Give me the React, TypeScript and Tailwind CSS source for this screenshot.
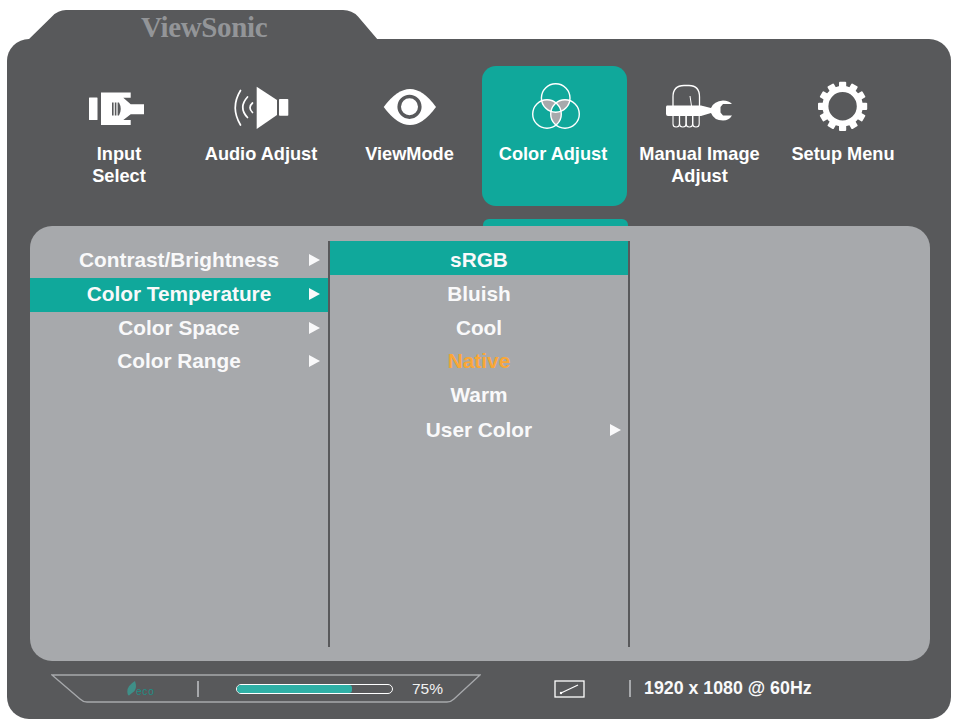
import React from "react";

const Arrow = () => (
  <svg width="11" height="12" viewBox="0 0 11 12" className="block">
    <path d="M0 0 L11 6 L0 12 Z" fill="#f9f9fa" />
  </svg>
);

const Ico = ({ cx, children }: { cx: number; children: React.ReactNode }) => (
  <svg width="90" height="60" viewBox={`${cx - 45} 80 90 60`} className="mx-auto mt-[14px] block">
    {children}
  </svg>
);

const InputIcon = () => (
  <Ico cx={119}>
    <rect x="89" y="97.5" width="8.5" height="22.5" rx="0.5" fill="#fff" />
    <path d="M101 92.5 H130.7 V97.7 H123.3 L130.7 104.3 H144 V114.3 H130.7 L123.3 120 H130.7 V125 H101 Z" fill="#fff" />
    <path d="M112 102.5 H113.6 V115.5 H112 Z M114.8 102.5 H116.4 V115.5 H114.8 Z M117.6 102.5 H119 Q122.5 109 119 115.5 H117.6 Z" fill="#58595b" />
  </Ico>
);

const AudioIcon = () => (
  <Ico cx={261}>
    <path d="M256.7 86.7 L277 100 V115 L256.7 129 Z" fill="#fff" />
    <rect x="279" y="99" width="9.3" height="16.7" rx="0.8" fill="#fff" />
    <g fill="none" stroke="#fff" strokeWidth="1.7" strokeLinecap="round">
      <path d="M240.5 90.5 Q230 107.5 240.5 125" />
      <path d="M247.5 97 Q238 107.5 247.5 117.5" />
      <path d="M252.5 103 Q247.5 107.5 252.5 112.5" />
    </g>
  </Ico>
);

const EyeIcon = () => (
  <Ico cx={409}>
    <path d="M382.7 107 Q396 89 409 89 Q422 89 435 107 Q422 125 409 125 Q396 125 382.7 107 Z" fill="#fff" />
    <circle cx="408.5" cy="106.8" r="10.3" fill="#fff" stroke="#58595b" strokeWidth="3.6" />
  </Ico>
);

const ColorIcon = () => (
  <Ico cx={553}>
    <defs>
      <clipPath id="ct"><circle cx="553.7" cy="98" r="14.3" /></clipPath>
      <clipPath id="cl"><circle cx="545" cy="114" r="14.3" /></clipPath>
    </defs>
    <g clipPath="url(#ct)">
      <circle cx="545" cy="114" r="14.3" fill="#a7a9ac" />
      <circle cx="563" cy="114" r="14.3" fill="#a7a9ac" />
    </g>
    <g clipPath="url(#cl)">
      <circle cx="563" cy="114" r="14.3" fill="#a7a9ac" />
    </g>
    <g clipPath="url(#ct)">
      <g clipPath="url(#cl)">
        <circle cx="563" cy="114" r="14.3" fill="#10a89b" />
      </g>
    </g>
    <g fill="none" stroke="#fff" strokeWidth="1.4">
      <circle cx="553.7" cy="98" r="14.3" />
      <circle cx="545" cy="114" r="14.3" />
      <circle cx="563" cy="114" r="14.3" />
    </g>
  </Ico>
);

const WrenchIcon = () => (
  <Ico cx={699}>
    <path d="M672 106 V97 Q672 85.5 683 85.5 H688 Q698.5 85.5 698.5 97 V107" fill="none" stroke="#fff" strokeWidth="1.3" />
    <path d="M689 96 L690.5 106" fill="none" stroke="#fff" strokeWidth="1" />
    <path d="M666 105.5 H700 L710 108 Q713 101 722 100.5 Q728 100.5 731 104 H722 L719.5 107 V112.5 L722 115.5 H731 Q728 120.5 722 120.5 Q713 120.5 710 113 L700 116 H667 Q665 116 665 114 V107.5 Q665 105.5 666 105.5 Z" fill="#fff" />
    <g fill="none" stroke="#fff" strokeWidth="1.1">
      <rect x="672" y="113" width="6.4" height="14" rx="3" />
      <rect x="678.6" y="113" width="6.4" height="14" rx="3" />
      <rect x="685.2" y="113" width="6.4" height="14" rx="3" />
      <rect x="691.8" y="113" width="6.4" height="14" rx="3" />
    </g>
  </Ico>
);

const GearIcon = () => (
  <Ico cx={843}>
    <circle cx="842.6" cy="106.3" r="17.2" fill="none" stroke="#fff" strokeWidth="6" />
    {Array.from({ length: 12 }).map((_, i) => (
      <rect
        key={i}
        x="839"
        y="81.7"
        width="7.2"
        height="8"
        rx="1"
        fill="#fff"
        transform={`rotate(${i * 30} 842.6 106.3)`}
      />
    ))}
  </Ico>
);

const leftRows = [
  { t: "Contrast/Brightness", h: "h-[35px]" },
  { t: "Color Temperature", h: "h-[34px] bg-[#10a89b]" },
  { t: "Color Space", h: "h-[33px]" },
  { t: "Color Range", h: "h-[33px]" },
];

const rightRows = [
  { t: "Bluish", c: "text-[#f9f9fa]", a: false },
  { t: "Cool", c: "text-[#f9f9fa]", a: false },
  { t: "Native", c: "text-[#f9a737]", a: false },
  { t: "Warm", c: "text-[#f9f9fa]", a: false },
  { t: "User Color", c: "text-[#f9f9fa] mt-[2px]", a: true },
];

export default function App() {
  return (
    <div className="w-[954px] h-[720px] bg-white pt-[10px] pl-[7px] font-['Liberation_Sans',Arial,sans-serif] overflow-hidden">
      {/* tab */}
      <div className="relative h-[29px] w-[378px] pl-[134px] pt-[3px]">
        <svg width="378" height="31" viewBox="7 9.5 378 31" className="absolute left-0 top-0">
          <path d="M27 40.5 L52 16 Q58 9.5 66 9.5 H343 Q352 9.5 358 16 L378 39.5 V40.5 Z" fill="#58595b" />
        </svg>
        <div className="relative font-['Liberation_Serif','Times_New_Roman',serif] font-bold text-[29px] leading-[28px] text-[#939598] tracking-[-0.35px]">
          ViewSonic
        </div>
      </div>

      {/* body */}
      <div className="w-[944px] h-[680px] bg-[#58595b] rounded-[22px] pt-[27px] relative">
        <div className="flex h-[140px] pl-[41px] text-white font-bold text-[18.2px] leading-[22px] text-center">
          <div className="w-[142px]">
            <InputIcon />
            <div className="mt-[3px]">Input<br />Select</div>
          </div>
          <div className="w-[142px]">
            <AudioIcon />
            <div className="mt-[3px]">Audio Adjust</div>
          </div>
          <div className="w-[145px] ml-[5px]">
            <EyeIcon />
            <div className="mt-[3px]">ViewMode</div>
          </div>
          <div className="w-[145px] rounded-[14px] bg-[#10a89b]">
            <ColorIcon />
            <div className="mt-[3px] pr-[3px]">Color Adjust</div>
          </div>
          <div className="w-[145px]">
            <WrenchIcon />
            <div className="mt-[3px]">Manual Image<br />Adjust</div>
          </div>
          <div className="w-[142px]">
            <GearIcon />
            <div className="mt-[3px]">Setup Menu</div>
          </div>
        </div>

        <div className="mt-[13px] ml-[476px] w-[145px] h-[7px] bg-[#10a89b] rounded-t-[6px]" />

        {/* panel */}
        <div className="ml-[23px] w-[900px] h-[435px] bg-[#a7a9ac] rounded-[22px] pt-[15px] flex overflow-hidden font-bold text-[20.8px] text-[#f9f9fa]">
          <div className="w-[298px] pt-[2px]">
            {leftRows.map((r) => (
              <div key={r.t} className={`grid grid-cols-[1fr_auto_1fr] items-center pb-[2px] ${r.h}`}>
                <span />
                <span>{r.t}</span>
                <span className="justify-self-end pr-[8px]"><Arrow /></span>
              </div>
            ))}
          </div>
          <div className="w-[302px] h-[406px] border-x-2 border-[#58595b]">
            <div className="h-[34px] pt-[3px] bg-[#10a89b] text-center leading-[31px]">sRGB</div>
            <div className="mt-[2px]">
              {rightRows.map((r) => (
                <div key={r.t} className={`grid grid-cols-[1fr_auto_1fr] items-center h-[33.5px] ${r.c}`}>
                  <span />
                  <span>{r.t}</span>
                  <span className="justify-self-end pr-[7px]">{r.a && <Arrow />}</span>
                </div>
              ))}
            </div>
          </div>
        </div>

        {/* status */}
        <div className="mt-[14px] flex items-center h-[27px] ml-[45px] text-white">
          <div className="relative w-[428px] h-[27px] flex items-center">
            <svg width="430" height="29" viewBox="0 0 430 29" className="absolute -left-px -top-px">
              <path
                d="M1 1 H429 L403 25 Q400 28 396 28 H36 Q32 28 29 25 Z"
                fill="none"
                stroke="#a7a9ac"
                strokeWidth="1.3"
              />
            </svg>
            <div className="relative ml-[75px] w-[27px] h-[15px] flex items-end">
              <svg width="9" height="15" viewBox="0 0 9 15" className="block shrink-0">
                <path d="M1 14 Q-2 6 8 0 Q11 9 5 12 L2 14.5 Z" fill="#3f8f88" />
              </svg>
              <span className="text-[#1f8f86] text-[10px] leading-[8px] font-normal tracking-[0.8px]">eco</span>
            </div>
            <div className="relative ml-[43px] w-[2px] h-[16px] bg-[#a7a9ac]" />
            <div className="relative ml-[37px] w-[157px] h-[10px] rounded-full border border-white overflow-hidden">
              <div className="h-full w-[74%] bg-[#2fb0a6] rounded-r-[3px]" />
            </div>
            <div className="relative ml-[19px] text-[15.5px] font-normal text-[#f1f2f2]">75%</div>
          </div>
          <svg width="31" height="18" viewBox="0 0 31 18" className="ml-[74px] block">
            <rect x="1" y="1" width="29" height="16" fill="none" stroke="#fff" strokeWidth="1.3" />
            <path d="M7 13 L24 5" stroke="#fff" strokeWidth="1.2" />
            <circle cx="7" cy="13" r="1.2" fill="#fff" />
          </svg>
          <div className="ml-[44px] w-[2px] h-[17px] bg-[#a7a9ac]" />
          <div className="ml-[13px] text-[17.8px] font-bold text-[#f9f9fa]">1920 x 1080 @ 60Hz</div>
        </div>
      </div>
    </div>
  );
}
